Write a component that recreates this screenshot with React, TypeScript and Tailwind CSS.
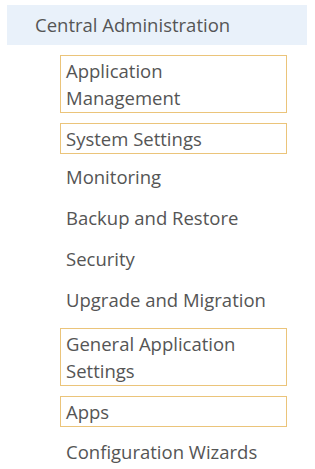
const items: { lines: string[]; boxed?: boolean; extra?: string }[] = [
  { lines: ['Application', 'Management'], boxed: true },
  { lines: ['System Settings'], boxed: true },
  { lines: ['Monitoring'], extra: '-mt-[2px]' },
  { lines: ['Backup and Restore'] },
  { lines: ['Security'] },
  { lines: ['Upgrade and Migration'] },
  { lines: ['General Application', 'Settings'], boxed: true, extra: 'mt-[2px]' },
  { lines: ['Apps'], boxed: true },
  { lines: ['Configuration Wizards'] },
];

export default function App() {
  return (
    <div className="w-[315px] h-[469px] bg-white overflow-hidden font-['Open_Sans',sans-serif] text-[#555]">
      <div className="flex flex-col gap-[10px] pt-[5px]">
        <div className="ml-[7px] w-[300px] h-[40px] bg-[#e9f1fa] flex items-center pl-[28px] text-[18.5px]">
          Central Administration
        </div>
        <ul className="flex flex-col gap-[10px] ml-[60px] w-[227px]">
          {items.map((item) => (
            <li
              key={item.lines.join(' ')}
              className={`text-[18.5px] leading-[27px] px-[5px] border ${
                item.boxed ? 'border-[#ebc47a] py-[1px]' : 'border-transparent pt-0 pb-[2px]'
              } ${item.extra ?? ''}`}
            >
              {item.lines.map((line, i) => (
                <span key={i} className="block">
                  {line}
                </span>
              ))}
            </li>
          ))}
        </ul>
      </div>
    </div>
  );
}
